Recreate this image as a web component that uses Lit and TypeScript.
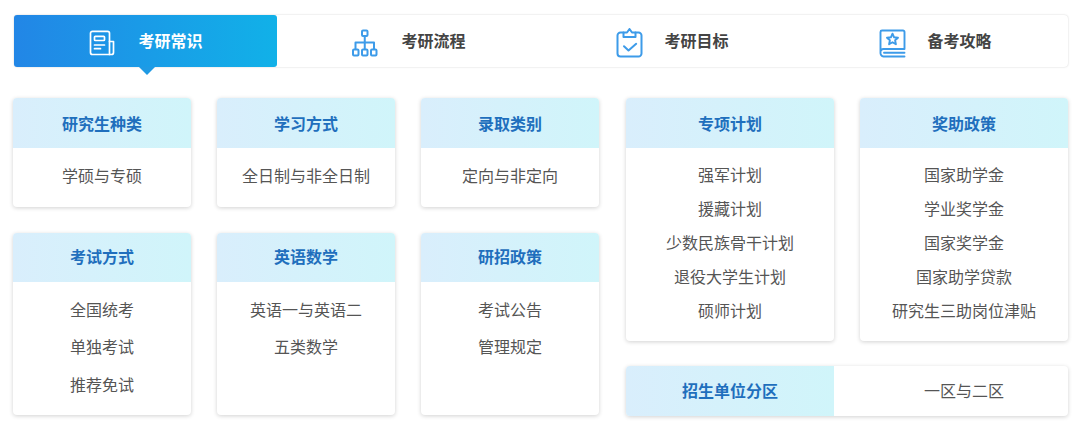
import { LitElement, html, css, svg } from "lit";
import { customElement } from "lit/decorators.js";

const icons = [
  svg`<svg class="ico" viewBox="0 0 28 30" fill="none" stroke="currentColor" stroke-width="1.7" stroke-linejoin="round" stroke-linecap="round"><path d="M20.500 26.500H3.500a2 2 0 0 1-2-2V5.300a2 2 0 0 1 2-2h15a2 2 0 0 1 2 2z"/><path d="M20.500 13.500h4v11a2 2 0 0 1-2 2h-2"/><rect x="5.500" y="8.300" width="10" height="4.200" rx=".8"/><path d="M5.500 17h10M5.500 20.700h6"/></svg>`,
  svg`<svg class="ico" viewBox="0 0 28 30" fill="none" stroke="currentColor" stroke-width="2" stroke-linejoin="round"><rect x="10" y="2.500" width="5.500" height="5.500" rx="1"/><path d="M12.750 8v13.500M3.500 21.500V14.500h18.500v7"/><rect x="1" y="21.500" width="5.500" height="6" rx="1"/><rect x="10" y="21.500" width="5.500" height="6" rx="1"/><rect x="19" y="21.500" width="5.500" height="6" rx="1"/></svg>`,
  svg`<svg class="ico" viewBox="0 0 28 30" fill="none" stroke="currentColor" stroke-width="2" stroke-linejoin="round" stroke-linecap="round"><path d="M8.500 4.500H5.500a3 3 0 0 0-3 3V25.500a3 3 0 0 0 3 3h18a3 3 0 0 0 3-3V7.500a3 3 0 0 0-3-3h-3"/><path d="M8.500 9V4.500h3.500L14.500 1l2.500 3.500h3.500V9z"/><path d="M9 18.200l4.500 4.300 7.700-6.700"/></svg>`,
  svg`<svg class="ico" viewBox="0 0 28 30" fill="none" stroke="currentColor" stroke-width="1.9" stroke-linejoin="round" stroke-linecap="round"><path d="M2.500 25V4a1.500 1.500 0 0 1 1.500-1.500h21A1.500 1.500 0 0 1 26.500 4v17H5.500a3 3 0 0 0-3 3.500 3.500 3.500 0 0 0 3 4h21"/><path d="M6 24.700h20.500"/><path d="M14.500 5.700l1.600 3.600 3.900.4-2.900 2.600.8 3.900-3.400-2-3.400 2 .8-3.900-2.900-2.600 3.900-.4z"/></svg>`,
];

const tabs = ["考研常识", "考研流程", "考研目标", "备考攻略"];
const left = [
  ["研究生种类", ["学硕与专硕"]],
  ["学习方式", ["全日制与非全日制"]],
  ["录取类别", ["定向与非定向"]],
  ["考试方式", ["全国统考", "单独考试", "推荐免试"]],
  ["英语数学", ["英语一与英语二", "五类数学"]],
  ["研招政策", ["考试公告", "管理规定"]],
] as [string, string[]][];
const right = [
  ["专项计划", ["强军计划", "援藏计划", "少数民族骨干计划", "退役大学生计划", "硕师计划"]],
  ["奖助政策", ["国家助学金", "学业奖学金", "国家奖学金", "国家助学贷款", "研究生三助岗位津贴"]],
] as [string, string[]][];

@customElement("app-root")
export class AppRoot extends LitElement {
  static styles = css`
    :host {
      display: block;
      width: 1080px;
      height: 427px;
      box-sizing: border-box;
      padding: 15px 12px 0 13px;
      background: #fff;
      font-family: "Noto Sans CJK SC", "Noto Sans", sans-serif;
      font-size: 16px;
      color: #555;
      overflow: hidden;
    }
    .tabs {
      display: grid;
      grid-template-columns: repeat(4, 263px);
      width: 1054px;
      height: 52px;
      margin-left: 1px;
      border-radius: 4px;
      box-shadow: 0 0 2px rgba(0, 0, 0, 0.2);
    }
    .tab {
      position: relative;
      display: flex;
      align-items: center;
      justify-content: center;
      gap: 21px;
      font-weight: 700;
      color: #444;
    }
    .tab span {
      margin-bottom: 2px;
    }
    .tab .ico {
      width: 28px;
      height: 30px;
      margin: 3px 0 0 1px;
      color: #3d9be9;
    }
    .tab.on {
      color: #fff;
      border-radius: 3px;
      background: linear-gradient(90deg, #2286e6, #11b1e8);
    }
    .tab.on .ico {
      color: #fff;
    }
    .tab.on::after {
      content: "";
      position: absolute;
      left: 125px;
      top: 100%;
      border: 8px solid transparent;
      border-top-color: #1f9ae4;
      border-bottom: 0;
    }
    .body {
      display: flex;
      gap: 27px;
      margin-top: 31px;
    }
    .grid {
      display: grid;
      grid-template-columns: repeat(3, 178px);
      grid-template-rows: 109px 182px;
      gap: 26px;
    }
    .grid .card:nth-child(n + 4) .head {
      height: 49px;
      padding-bottom: 3px;
      box-sizing: border-box;
    }
    .side {
      display: flex;
      flex-direction: column;
      gap: 25px;
    }
    .pair {
      display: flex;
      gap: 26px;
    }
    .pair .card {
      width: 208px;
      height: 243px;
    }
    .card {
      border-radius: 4px;
      background: #fff;
      box-shadow: 0 1px 4px rgba(0, 0, 0, 0.18);
      overflow: hidden;
      text-align: center;
    }
    .head {
      display: flex;
      align-items: center;
      justify-content: center;
      height: 50px;
      font-weight: 700;
      color: #1f6fbd;
      background: linear-gradient(90deg, #d9eefc, #d0f5fa);
    }
    .list {
      padding-top: 8.600px;
    }
    .list div {
      height: 37.500px;
      line-height: 37.500px;
    }
    .pair .list div {
      height: 34px;
      line-height: 34px;
    }
    .wide {
      display: grid;
      grid-template-columns: 208px 1fr;
      height: 50px;
      width: 442px;
    }
    .wide .head {
      box-sizing: border-box;
      padding-bottom: 2px;
    }
    .wide .val {
      display: flex;
      align-items: center;
      justify-content: center;
      padding-left: 26px;
      padding-bottom: 2px;
    }
  `;

  private card(c: [string, string[]]) {
    return html`<div class="card">
      <div class="head">${c[0]}</div>
      <div class="list">${c[1].map((t) => html`<div>${t}</div>`)}</div>
    </div>`;
  }

  render() {
    return html`
      <div class="tabs">
        ${tabs.map(
          (t, i) => html`<div class="tab ${i === 0 ? "on" : ""}">${icons[i]}<span>${t}</span></div>`
        )}
      </div>
      <div class="body">
        <div class="grid">${left.map((c) => this.card(c))}</div>
        <div class="side">
          <div class="pair">${right.map((c) => this.card(c))}</div>
          <div class="card wide">
            <div class="head">招生单位分区</div>
            <div class="val">一区与二区</div>
          </div>
        </div>
      </div>
    `;
  }
}
